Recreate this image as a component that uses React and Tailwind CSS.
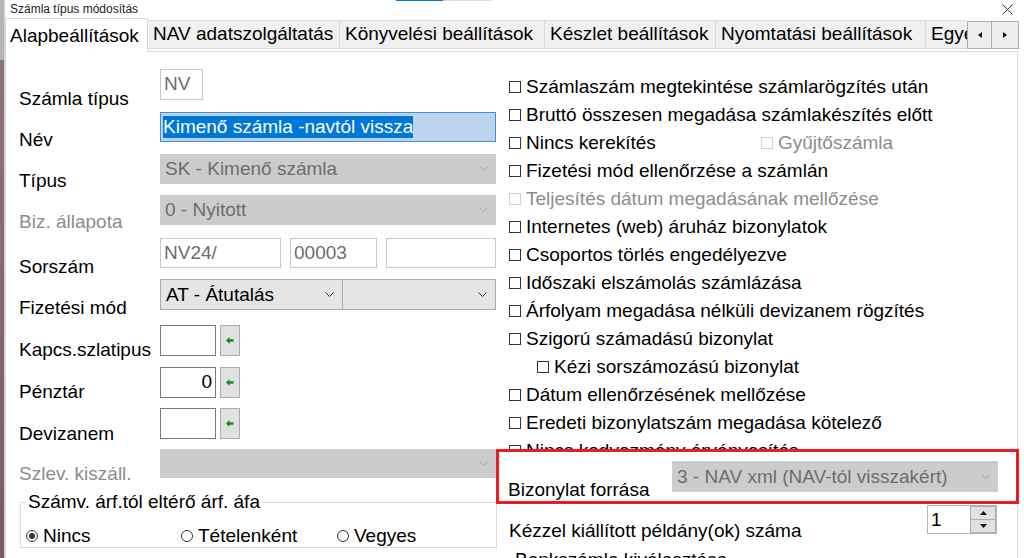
import clsx from "clsx";

function Chevron({ dark }) {
  return (
    <svg width="9" height="6" viewBox="0 0 9 6" className="shrink-0">
      <path d="M0.5 0.5 L4.5 4.5 L8.5 0.5" fill="none" stroke={dark ? "#333" : "#a8a8a8"} strokeWidth="1" />
    </svg>
  );
}

function GreenBtn() {
  return (
    <div className="ml-[4px] flex h-[31px] w-[20px] items-center justify-center border border-[#adadad] bg-[#e1e1e1]">
      <svg width="8" height="7" viewBox="0 0 8 7">
        <path d="M0 3.5 L3.5 0 L3.5 2.3 L7.5 2.3 L7.5 4.7 L3.5 4.7 L3.5 7 Z" fill="#139013" />
      </svg>
    </div>
  );
}

function Select({ text, className, dark }) {
  return (
    <div
      className={clsx(
        "flex items-center justify-between pl-[5px] pr-[8px] leading-[22px]",
        dark ? "border border-[#acacac] bg-[#e5e5e5] text-black" : "bg-[#cccccc] text-[#6d6d6d]",
        className
      )}
    >
      <span className="whitespace-nowrap">{text}</span>
      <Chevron dark={dark} />
    </div>
  );
}

function Row({ label, h, pt = "pt-[17px]", gray, children }) {
  return (
    <div className={clsx("flex items-start", h)}>
      <div className={clsx("w-[141px] shrink-0 whitespace-nowrap leading-[22px]", pt, gray && "text-[#8d8d8d]")}>
        {label}
      </div>
      <div className="flex items-start">{children}</div>
    </div>
  );
}

function Check({ label, disabled, className }) {
  return (
    <div className={clsx("flex h-[28px] items-center", className)}>
      <span
        className={clsx(
          "h-[12px] w-[12px] shrink-0 border",
          disabled ? "border-[#cfcfcf]" : "border-[#333333]"
        )}
      />
      <span className={clsx("ml-[5px] whitespace-nowrap", disabled && "text-[#8d8d8d]")}>{label}</span>
    </div>
  );
}

function Radio({ label, checked, className }) {
  return (
    <div className={clsx("flex items-center", className)}>
      <span className="flex h-[12px] w-[12px] items-center justify-center rounded-full border border-[#333333]">
        {checked && <span className="h-[6px] w-[6px] rounded-full bg-[#333333]" />}
      </span>
      <span className="ml-[5px] whitespace-nowrap">{label}</span>
    </div>
  );
}

const tabs = [
  { t: "NAV adatszolgáltatás", w: "w-[192px]" },
  { t: "Könyvelési beállítások", w: "w-[205px]" },
  { t: "Készlet beállítások", w: "w-[171px]" },
  { t: "Nyomtatási beállítások", w: "w-[210px]" },
];

export default function App() {
  return (
    <div className="flex h-[558px] w-[1024px] overflow-hidden bg-white font-['Liberation_Sans',Arial,sans-serif] text-[19px] text-black">
      <div className="flex w-[4px] shrink-0 flex-col">
        <div className="h-[60px] bg-[#b9b4b4]" />
        <div className="flex-1 bg-gradient-to-b from-[#8f7474] to-[#7a5a60]" />
      </div>
      <div className="relative flex flex-1 flex-col border-l border-[#d4d4d4]">
        <div className="absolute left-[391px] top-0 h-px w-[47px] bg-[#0078d7]" />
        <div className="absolute left-[438px] top-0 h-px w-[48px] bg-[#dcdcdc]" />

        {/* title bar */}
        <div className="flex h-[22px] items-center justify-between pl-[5px] pr-[11px]">
          <span className="text-[12px] text-[#222]">Számla típus módosítás</span>
          <svg width="11" height="11" viewBox="0 0 11 11">
            <path d="M0.5 0.5 L10.5 10.5 M10.5 0.5 L0.5 10.5" stroke="#333" strokeWidth="1" />
          </svg>
        </div>

        {/* tabs */}
        <div className="flex h-[33px] items-end">
          <div className="relative z-10 -mb-px flex h-[34px] w-[143px] items-center border border-b-0 border-[#d9d9d9] bg-white pl-[4px] pt-[2px]">
            Alapbeállítások
          </div>
          {tabs.map((tab) => (
            <div
              key={tab.t}
              className={clsx(
                "mb-[2px] flex h-[29px] shrink-0 items-center whitespace-nowrap border border-l-0 border-[#d9d9d9] bg-[#f0f0f0] pl-[5px]",
                tab.w
              )}
            >
              {tab.t}
            </div>
          ))}
          <div className="mb-[2px] flex h-[29px] w-[41px] shrink-0 items-center overflow-hidden border-y border-[#d9d9d9] bg-[#f0f0f0] pl-[5px]">
            Egyéb
          </div>
          <div className="mb-[2px] flex h-[28px] shrink-0">
            <div className="flex w-[25px] items-center justify-center border border-[#adadad] bg-[#ededed]">
              <svg width="4" height="6" viewBox="0 0 4 6"><path d="M4 0 L0 3 L4 6 Z" fill="#111" /></svg>
            </div>
            <div className="flex w-[27px] items-center justify-center border border-l-0 border-[#adadad] bg-[#ededed]">
              <svg width="4" height="6" viewBox="0 0 4 6"><path d="M0 0 L4 3 L0 6 Z" fill="#111" /></svg>
            </div>
          </div>
        </div>

        {/* panel */}
        <div className="flex w-[1013px] flex-1 border border-[#d9d9d9] bg-white">
          {/* left column */}
          <div className="flex w-[490px] shrink-0 flex-col pl-[13px] pt-[17px]">
            <Row label="Számla típus" h="h-[43px]" pt="pt-[19px]">
              <div className="flex h-[31px] w-[43px] items-center border border-[#c8c8c8] pl-[3px] text-[#6d6d6d]">NV</div>
            </Row>
            <Row label="Név" h="h-[42px]" pt="pt-[17px]">
              <div className="flex h-[30px] w-[336px] items-center border border-[#3f8fdc] bg-[#bdd4ee] pl-[2px]">
                <span className="whitespace-nowrap bg-[#0078d7] leading-[22px] text-white">Kimenő számla -navtól vissza</span>
              </div>
            </Row>
            <Row label="Típus" h="h-[41px]" pt="pt-[16px]">
              <Select text="SK - Kimenő számla" className="h-[30px] w-[336px]" />
            </Row>
            <Row label="Biz. állapota" h="h-[43px]" pt="pt-[16px]" gray>
              <Select text="0 - Nyitott" className="h-[30px] w-[336px]" />
            </Row>
            <Row label="Sorszám" h="h-[41px]" pt="pt-[18px]">
              <div className="flex h-[30px] w-[121px] items-center border border-[#c8c8c8] pl-[3px] text-[#6d6d6d]">NV24/</div>
              <div className="ml-[9px] flex h-[30px] w-[87px] items-center border border-[#c8c8c8] pl-[3px] text-[#6d6d6d]">00003</div>
              <div className="ml-[9px] h-[30px] w-[110px] border border-[#c8c8c8]" />
            </Row>
            <Row label="Fizetési mód" h="h-[46px]" pt="pt-[18px]">
              <Select dark text="AT - Átutalás" className="h-[31px] w-[183px]" />
              <Select dark text="" className="-ml-px h-[31px] w-[154px]" />
            </Row>
            <Row label="Kapcs.szlatipus" h="h-[42px]" pt="pt-[14px]">
              <div className="h-[31px] w-[56px] border border-[#7a7a7a]" />
              <GreenBtn />
            </Row>
            <Row label="Pénztár" h="h-[41px]" pt="pt-[14px]">
              <div className="flex h-[31px] w-[56px] items-center justify-end border border-[#7a7a7a] pr-[3px]">0</div>
              <GreenBtn />
            </Row>
            <Row label="Devizanem" h="h-[41px]" pt="pt-[15px]">
              <div className="h-[31px] w-[56px] border border-[#7a7a7a]" />
              <GreenBtn />
            </Row>
            <Row label="Szlev. kiszáll." h="h-[42px]" pt="pt-[14px]" gray>
              <Select text="" className="h-[29px] w-[336px]" />
            </Row>
            <fieldset className="ml-px w-[477px] border border-[#dcdcdc] px-[5px] pt-[12px]">
              <legend className="px-[2px] leading-[22px]">Számv. árf.tól eltérő árf. áfa</legend>
              <div className="flex h-[22px] items-center">
                <Radio checked label="Nincs" className="w-[155px]" />
                <Radio label="Tételenként" className="w-[156px]" />
                <Radio label="Vegyes" />
              </div>
            </fieldset>
          </div>

          {/* right column */}
          <div className="flex w-[521px] shrink-0 flex-col pt-[21px]">
            <div className="flex flex-col pl-[13px]">
              <Check label="Számlaszám megtekintése számlarögzítés után" />
              <Check label="Bruttó összesen megadása számlakészítés előtt" />
              <div className="flex">
                <Check label="Nincs kerekítés" className="w-[252px]" />
                <Check label="Gyűjtőszámla" disabled />
              </div>
              <Check label="Fizetési mód ellenőrzése a számlán" />
              <Check label="Teljesítés dátum megadásának mellőzése" disabled />
              <Check label="Internetes (web) áruház bizonylatok" />
              <Check label="Csoportos törlés engedélyezve" />
              <Check label="Időszaki elszámolás számlázása" />
              <Check label="Árfolyam megadása nélküli devizanem rögzítés" />
              <Check label="Szigorú számadású bizonylat" />
              <Check label="Kézi sorszámozású bizonylat" className="pl-[28px]" />
              <Check label="Dátum ellenőrzésének mellőzése" />
              <Check label="Eredeti bizonylatszám megadása kötelező" />
              <Check label="Nincs kedvezmény érvényesítés" />
            </div>

            <div className="relative z-10 -mt-[16px] flex h-[55px] w-[523px] items-start border-[3px] border-[#ed1c24] bg-white">
              <div className="w-[173px] shrink-0 whitespace-nowrap pl-[9px] pt-[27px] leading-[22px]">Bizonylat forrása</div>
              <Select text="3 - NAV xml (NAV-tól visszakért)" className="mt-[9px] h-[31px] w-[326px]" />
            </div>

            <div className="mt-px flex items-start pl-[13px] pr-[20px]">
              <div className="mt-[15px] whitespace-nowrap leading-[22px]">Kézzel kiállított példány(ok) száma</div>
              <div className="ml-auto flex h-[29px] w-[70px] border border-[#b5b5b5]">
                <div className="flex flex-1 items-center pl-[3px] leading-[22px]">1</div>
                <div className="flex w-[26px] flex-col">
                  <div className="flex flex-1 items-center justify-center border border-[#adadad] bg-[#e1e1e1]">
                    <svg width="7" height="4" viewBox="0 0 7 4"><path d="M0 4 L3.5 0 L7 4 Z" fill="#111" /></svg>
                  </div>
                  <div className="flex flex-1 items-center justify-center border border-t-0 border-[#adadad] bg-[#e1e1e1]">
                    <svg width="7" height="4" viewBox="0 0 7 4"><path d="M0 0 L3.5 4 L7 0 Z" fill="#111" /></svg>
                  </div>
                </div>
              </div>
            </div>
            <div className="mt-[7px] whitespace-nowrap pl-[19px] leading-[22px]">Bankszámla kiválasztása</div>
          </div>
        </div>
      </div>
    </div>
  );
}
